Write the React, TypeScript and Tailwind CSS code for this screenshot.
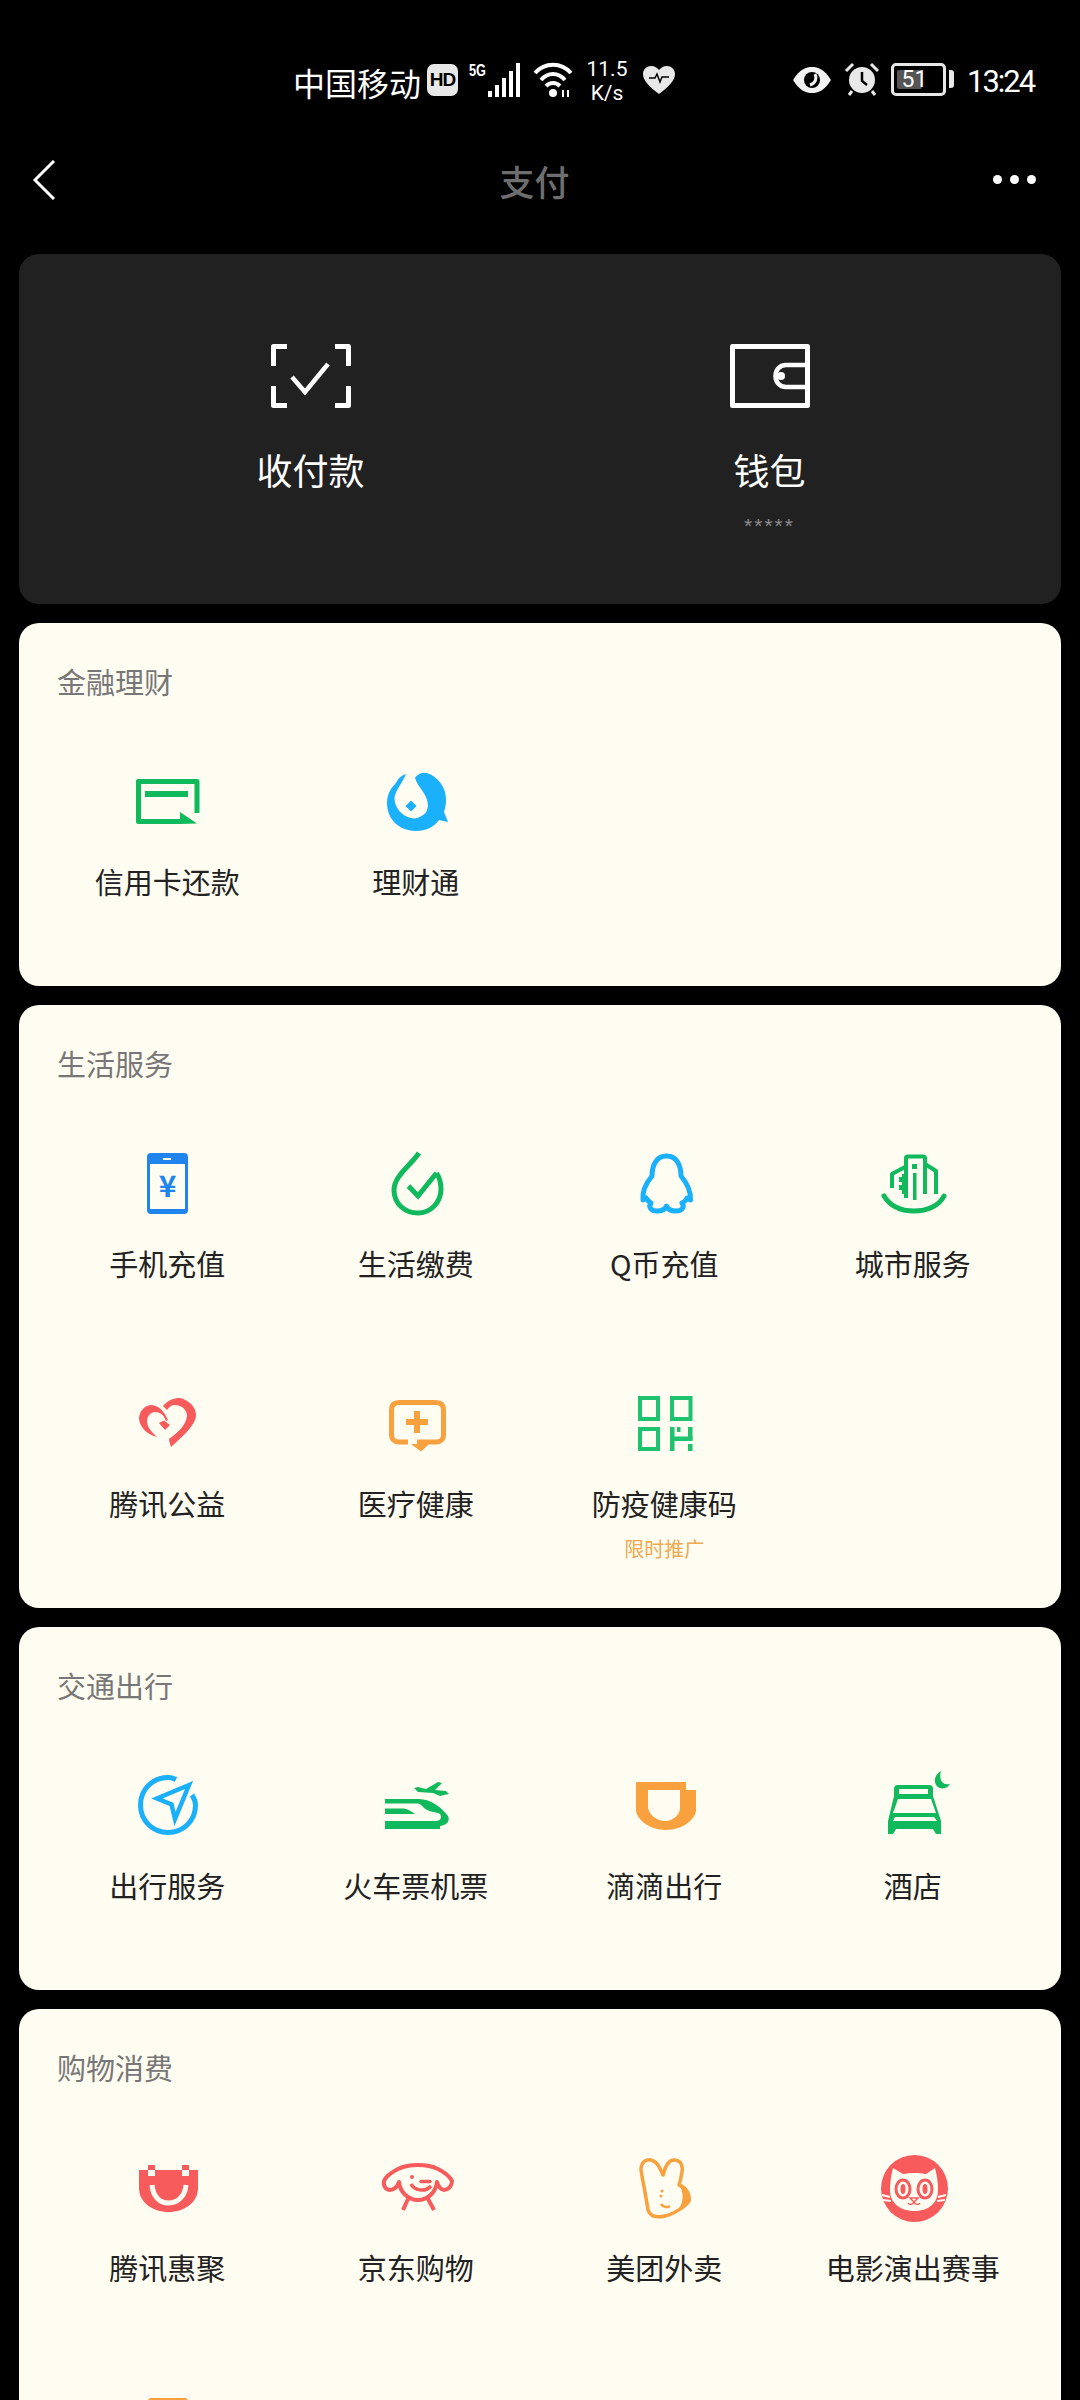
import type { ReactNode } from "react";

const CREAM = "#fffcf1";
const GREEN = "#10b95c";
const BLUE = "#1ab0fc";
const ORANGE = "#f8a13e";
const RED = "#f85b5c";

function Box({ children }: { children: ReactNode }) {
  return (
    <svg viewBox="0 0 80 80" className="w-[80px] h-[80px]" aria-hidden="true">
      {children}
    </svg>
  );
}

function CardIcon() {
  return (
    <Box>
      <path d="M70 51V19.500H11.500V59.500H55" fill="none" stroke={GREEN} strokeWidth="5" strokeLinejoin="round" />
      <rect x="18" y="29" width="43" height="6" fill={GREEN} />
      <path d="M53 50L70 61.500L53 62Z" fill={GREEN} />
    </Box>
  );
}

function FishIcon() {
  return (
    <Box>
      <path
        d="M30 12C24 14 22 17 20 21C14 27 11 33 11 41C11 58 24 69 40 69C50 69 58 65 63 58L72 60L68 50C72 38 70 26 62 18C57 13 51 10 46 11C42 12 40 14 39 16C42 26 52 32 52 44C51 50 49 52 47 53C43 56 39 57 35 56C26 54 19 46 18.500 37C18.500 29 26 22 30 12Z"
        fill={BLUE}
      />
      <path d="M35 38.500L40.500 44L35 49.500L29.500 44Z" fill={BLUE} />
    </Box>
  );
}

function PhoneIcon() {
  return (
    <Box>
      <rect x="20" y="9" width="41" height="61" rx="4" fill="#1f85ec" />
      <rect x="23" y="20" width="35" height="45" fill={CREAM} />
      <rect x="36" y="14" width="8" height="2" fill={CREAM} />
      <text x="40.500" y="53" textAnchor="middle" fontSize="30" fontWeight="700" fill="#1f85ec">
        ¥
      </text>
    </Box>
  );
}

function DropIcon() {
  return (
    <Box>
      <path
        d="M43 9C34 22 18 32 18 46C18 60 29 69 42 69C55 69 65 58 65 45C65 38 63 33 60.500 29"
        fill="none"
        stroke={GREEN}
        strokeWidth="5"
      />
      <path d="M32.500 42L42 52L60.500 29" fill="none" stroke={GREEN} strokeWidth="5" />
    </Box>
  );
}

function PenguinIcon() {
  return (
    <Box>
      <path
        d="M42.500 12C32 12 28 22 28 32C23 38 18 47 19 56L22 54C24 57 25 58 27 59C24 63 27 67 33 67C38 67 41 66 42.500 62C44 66 47 67 52 67C58 67 61 63 58 59C60 58 62 57 63 54L66.500 56C67 47 62 38 57 32C57 22 53 12 42.500 12Z"
        fill="none"
        stroke={BLUE}
        strokeWidth="5"
        strokeLinejoin="round"
      />
    </Box>
  );
}

function CityIcon() {
  return (
    <Box>
      <path d="M11 52C17 62 28 67 41 67C54 67 66 62 71 52" fill="none" stroke={GREEN} strokeWidth="5" strokeLinecap="round" />
      <path
        d="M33 54V14Q33 12.500 35 12.500H50Q52 12.500 52 14V50M52 20L63 27V50M32 23L19 30V44M31 30V50"
        fill="none"
        stroke={GREEN}
        strokeWidth="4"
        strokeLinejoin="round"
      />
      <rect x="26" y="33" width="4" height="5" fill={GREEN} />
      <rect x="26" y="41" width="4" height="5" fill={GREEN} />
      <rect x="39" y="20" width="5" height="5" fill={GREEN} />
      <rect x="40" y="29" width="3.500" height="27" fill={GREEN} />
    </Box>
  );
}

function HeartIcon() {
  return (
    <Box>
      <path
        d="M36 22C41 16 47 14 53 14C62 16 69 23 69 31C69 41 54 54 44 63C43 60 42 57 42 55C50 49 59 42 60 32C60 26 55 21 48 21C44 21 42 23 40 26Z"
        fill={RED}
      />
      <path
        d="M41 36C38 29 33 22 25 21C17 21 12 28 12 35C13 44 21 51 30 53C26 49 20 44 20 37C20 32 24 28 28 28C33 28 37 31 39 37Z"
        fill={RED}
      />
      <path d="M32 39L37 36.500L43 41L38 46Z" fill={RED} />
    </Box>
  );
}

function MedicalIcon() {
  return (
    <Box>
      <path
        d="M32 58H23C18 58 15.500 55 15.500 51V26C15.500 21 18 18.500 23 18.500H60C65 18.500 67.500 21 67.500 26V51C67.500 55 65 58 60 58H41"
        fill="none"
        stroke={ORANGE}
        strokeWidth="5"
      />
      <path d="M41 60H59L51 67.500Z" fill={ORANGE} transform="translate(-6 0)" />
      <rect x="38" y="27" width="6" height="22" fill={ORANGE} />
      <rect x="30" y="35" width="22" height="6" fill={ORANGE} />
    </Box>
  );
}

function QrIcon() {
  const c = "#1fc26f";
  return (
    <Box>
      <rect x="16" y="14" width="18" height="21" fill="none" stroke={c} strokeWidth="4" />
      <rect x="48" y="14" width="18.500" height="21" fill="none" stroke={c} strokeWidth="4" />
      <rect x="16" y="45" width="18" height="20" fill="none" stroke={c} strokeWidth="4" />
      <rect x="46" y="43" width="4.500" height="24" fill={c} />
      <rect x="46" y="52.500" width="22.500" height="4.500" fill={c} />
      <rect x="64" y="43" width="4.500" height="13" fill={c} />
      <rect x="64" y="60" width="4.500" height="7" fill={c} />
      <rect x="53" y="43" width="3.500" height="5" fill={c} />
    </Box>
  );
}

function CompassIcon() {
  return (
    <Box>
      <path
        d="M49 13.500C46 12 44 11.500 41 11.500C26 11.500 13.500 23 13.500 39C13.500 55 26 66.500 41 66.500C56 66.500 68.500 55 68.500 39C68.500 35 67 32 65 29"
        fill="none"
        stroke={BLUE}
        strokeWidth="5"
      />
      <path d="M62 19L30 32.500L44.500 38.500L48 53Z" fill="none" stroke={BLUE} strokeWidth="4.500" />
    </Box>
  );
}

function TrainIcon() {
  return (
    <Box>
      <path d="M38 22L42 21L50 23L62 16L66 17L59 24L70 25L73 28L68 29L64 30L57 27L42 26Z" fill={GREEN} />
      <path
        d="M9 33H43C55 33 66 42 72 50C74 54 72 59 64 60V63H9V55H60C65 55 66 51 64 48C61 46 52 46 48 42C46 40 45 38 42 37.500H9Z"
        fill={GREEN}
      />
      <path d="M9 42.500H28C32 43 36 46 39 48H9Z" fill={GREEN} />
    </Box>
  );
}

function DidiIcon() {
  return (
    <Box>
      <path
        d="M12 16H62V24H72V44C72 52 60 64 42 64C24 64 12 52 12 44ZM24 24V40C24 48 32 55 41 55C50 55 56 48 56 42V24Z"
        fill={ORANGE}
        fillRule="evenodd"
      />
    </Box>
  );
}

function HotelIcon() {
  return (
    <Box>
      <path
        d="M25 19H56Q60 19 60 23V30L68 55V68H63L60 63H23L20 68H15V55L21 30V23Q21 19 25 19Z"
        fill={GREEN}
      />
      <rect x="26" y="23" width="29" height="5" fill={CREAM} />
      <path d="M25 33H58L63 47H20Z" fill={CREAM} />
      <path d="M20 55L22 51H61L64 55Z" fill={CREAM} />
      <path d="M68 5C61 9 60 17 65 21C69 24 75 22 77 18C72 19 69 17 68 14C67 11 67 8 68 5Z" fill={GREEN} />
    </Box>
  );
}

function BagIcon() {
  return (
    <Box>
      <path d="M12 22H71V40C71 54 58 64 41.500 64C25 64 12 54 12 40Z" fill={RED} />
      <rect x="21" y="17" width="7" height="5" fill={RED} />
      <rect x="55" y="17" width="7" height="5" fill={RED} />
      <rect x="21" y="22" width="7" height="6" fill={CREAM} />
      <rect x="55" y="22" width="7" height="6" fill={CREAM} />
      <path d="M25 37C26 49 33 55 41.500 55C50 55 58 49 59 37" fill="none" stroke={CREAM} strokeWidth="5" />
    </Box>
  );
}

function DogIcon() {
  return (
    <Box>
      <path
        d="M22 21C28 18 36 17 42 17C48 17 56 18 62 21C68 24 74 29 76 33C76 38 72 42 68 42C65 42 62 38 61 34C60 44 52 52 42 52C32 52 24 44 23 34C22 38 18 42 14 42C10 42 7 38 8 33C10 28 16 24 22 21Z"
        fill="none"
        stroke={RED}
        strokeWidth="4"
        strokeLinejoin="round"
      />
      <path d="M32 51L27 62M52 51L58 62" fill="none" stroke={RED} strokeWidth="4" />
      <path d="M35 36C38 42 49 45 55 38" fill="none" stroke={RED} strokeWidth="3.500" />
      <path d="M45 33.500H54" stroke={RED} strokeWidth="3.500" strokeLinecap="round" />
      <circle cx="36" cy="29" r="2" fill={RED} />
    </Box>
  );
}

function RabbitIcon() {
  return (
    <Box>
      <path
        d="M24 62C22 48 19 35 17 22C17 14 22 11 27 12C33 13 36 20 39 27C41 19 44 12 50 12C57 12 59 18 58 24C57 30 56 34 55 37C63 40 66 47 65 53C62 58 50 66 41 68C32 70 26 68 24 62Z"
        fill="none"
        stroke={ORANGE}
        strokeWidth="3.500"
        strokeLinejoin="round"
      />
      <path d="M55 37C63 40 66 47 65 53C62 58 58 60 54 62C60 54 60 44 55 37Z" fill={ORANGE} />
      <circle cx="38" cy="43" r="1.500" fill={ORANGE} />
      <circle cx="37" cy="48" r="1.500" fill={ORANGE} />
      <path d="M37 56C39 59 43 60 46 58" fill="none" stroke={ORANGE} strokeWidth="2.500" />
    </Box>
  );
}

function CatIcon() {
  return (
    <Box>
      <circle cx="41.500" cy="40.500" r="33.500" fill={RED} />
      <path
        d="M20 20L30 26C36 24.500 47 24.500 53 26L62 20C64 28 65 34 65 42C65 54 57 63 41.500 63C26 63 17 54 17 42C17 34 18 28 20 20Z"
        fill={CREAM}
      />
      <ellipse cx="30" cy="41" rx="7" ry="9" fill="none" stroke={RED} strokeWidth="3" />
      <ellipse cx="52" cy="41" rx="7" ry="9" fill="none" stroke={RED} strokeWidth="3" />
      <ellipse cx="30" cy="41" rx="2.500" ry="5" fill={RED} />
      <ellipse cx="52" cy="41" rx="2.500" ry="5" fill={RED} />
      <path d="M37 50H45L41 54ZM41 54C40 57 36 57 35 55M41 54C42 57 46 57 47 55" fill="none" stroke={RED} strokeWidth="1.500" />
      <path d="M9 47L17 49M10 52L18 53M73 47L65 49M72 52L64 53" stroke={CREAM} strokeWidth="2" />
    </Box>
  );
}

function PartialIcon() {
  return (
    <Box>
      <rect x="21" y="10" width="40" height="30" rx="3" fill={ORANGE} />
    </Box>
  );
}

type Item = { label: string; icon: ReactNode; sub?: string };

const sections: { title: string; items: Item[] }[] = [
  {
    title: "金融理财",
    items: [
      { label: "信用卡还款", icon: <CardIcon /> },
      { label: "理财通", icon: <FishIcon /> },
    ],
  },
  {
    title: "生活服务",
    items: [
      { label: "手机充值", icon: <PhoneIcon /> },
      { label: "生活缴费", icon: <DropIcon /> },
      { label: "Q币充值", icon: <PenguinIcon /> },
      { label: "城市服务", icon: <CityIcon /> },
      { label: "腾讯公益", icon: <HeartIcon /> },
      { label: "医疗健康", icon: <MedicalIcon /> },
      { label: "防疫健康码", icon: <QrIcon />, sub: "限时推广" },
    ],
  },
  {
    title: "交通出行",
    items: [
      { label: "出行服务", icon: <CompassIcon /> },
      { label: "火车票机票", icon: <TrainIcon /> },
      { label: "滴滴出行", icon: <DidiIcon /> },
      { label: "酒店", icon: <HotelIcon /> },
    ],
  },
  {
    title: "购物消费",
    items: [
      { label: "腾讯惠聚", icon: <BagIcon /> },
      { label: "京东购物", icon: <DogIcon /> },
      { label: "美团外卖", icon: <RabbitIcon /> },
      { label: "电影演出赛事", icon: <CatIcon /> },
      { label: "", icon: <PartialIcon /> },
    ],
  },
];

function StatusBar() {
  return (
    <div className="flex h-[135px] items-start pl-[293px] pt-[58px] text-white">
      <span className="w-[134px] mt-[4px] text-[32px] leading-[40px] whitespace-nowrap">中国移动</span>
      <span className="mt-[6px] flex h-[32px] w-[31px] items-center justify-center rounded-[7px] bg-[#e8e8e8] font-['Liberation_Sans',sans-serif] text-[19px] font-bold tracking-[-1px] text-black">
        HD
      </span>
      <svg viewBox="0 0 54 36" className="ml-[11px] mt-[4px] h-[36px] w-[54px]" aria-hidden="true">
        <text x="0" y="14" fontSize="16" fontWeight="700" fill="#fff" fontFamily="Liberation Sans" textLength="17" lengthAdjust="spacingAndGlyphs">
          5G
        </text>
        <rect x="19" y="29" width="4" height="6" fill="#fff" />
        <rect x="26" y="23" width="4" height="12" fill="#fff" />
        <rect x="33" y="16" width="4" height="19" fill="#fff" />
        <rect x="40" y="9" width="4" height="26" fill="#fff" />
        <rect x="47" y="1" width="4" height="34" fill="#fff" />
      </svg>
      <svg viewBox="0 0 40 36" className="ml-[10px] mt-[4px] h-[36px] w-[40px]" aria-hidden="true">
        <path d="M2 11C12 0 28 0 38 11M8 18C15 10 25 10 32 18M13 24C17 20 23 20 27 24" fill="none" stroke="#fff" strokeWidth="4" />
        <circle cx="20" cy="31" r="4" fill="#fff" />
        <path d="M30 28V35M35 28V35" stroke="#fff" strokeWidth="2" />
      </svg>
      <span className="ml-[11px] -mt-[1px] w-[46px] text-center font-['Roboto',sans-serif] text-[21px] leading-[24px]">
        11.5
        <br />
        K/s
      </span>
      <svg viewBox="0 0 34 30" className="ml-[12px] mt-[7px] h-[30px] w-[34px]" aria-hidden="true">
        <path d="M17 29C8 22 1 16 1 9C1 4 5 1 9 1C13 1 15 3 17 5C19 3 21 1 25 1C29 1 33 4 33 9C33 16 26 22 17 29Z" fill="#e8e8e8" />
        <path d="M7 13H13L15 9L18 17L20 12H27" fill="none" stroke="#000" strokeWidth="1.500" />
      </svg>
      <svg viewBox="0 0 40 28" className="ml-[116px] mt-[8px] h-[28px] w-[40px]" aria-hidden="true">
        <path d="M1 14C8 3 14 1 20 1C26 1 32 3 39 14C32 25 26 27 20 27C14 27 8 25 1 14Z" fill="#f2f2f2" />
        <circle cx="20" cy="14" r="8" fill="#000" />
        <path d="M23 8C25 12 24 17 18 19" fill="none" stroke="#f2f2f2" strokeWidth="3" />
      </svg>
      <svg viewBox="0 0 36 34" className="ml-[12px] mt-[4px] h-[34px] w-[36px]" aria-hidden="true">
        <circle cx="18" cy="18" r="13" fill="#e8e8e8" />
        <path d="M18 10V19L23 23" fill="none" stroke="#000" strokeWidth="2.500" />
        <path d="M2 9L9 2M34 9L27 2M8 29L5 33M28 29L31 33" stroke="#e8e8e8" strokeWidth="3" />
      </svg>
      <div className="relative ml-[11px] mt-[5px] h-[33px] w-[55px] rounded-[5px] border-[3px] border-[#e8e8e8] text-center font-['Roboto',sans-serif] text-[23px] leading-[27px]">
        <span className="absolute left-[3px] top-[4px] h-[19px] w-[25px] rounded-[2px] bg-[#555]" />
        <span className="relative -ml-[8px]">51</span>
      </div>
      <span className="ml-[3px] mt-[12px] h-[18px] w-[5px] rounded-r-[3px] bg-[#e8e8e8]" />
      <span className="ml-[13px] mt-[8px] font-['Roboto',sans-serif] text-[31px] leading-[32px] tracking-[-2px]">13:24</span>
    </div>
  );
}

function Header() {
  return (
    <div className="flex h-[119px] items-start justify-between pl-[32px] pr-[44px] pt-[25px]">
      <svg viewBox="0 0 24 40" className="h-[40px] w-[24px]" aria-hidden="true">
        <path d="M22 1L3 20L22 39" fill="none" stroke="#fff" strokeWidth="3" />
      </svg>
      <span className="ml-[20px] -mt-[1px] text-[35px] font-medium leading-[44px] text-[#6e6e6e]">支付</span>
      <div className="mt-[15px] flex gap-[8px]">
        <span className="h-[9px] w-[9px] rounded-full bg-white" />
        <span className="h-[9px] w-[9px] rounded-full bg-white" />
        <span className="h-[9px] w-[9px] rounded-full bg-white" />
      </div>
    </div>
  );
}

function PayCard() {
  return (
    <section className="grid h-[350px] grid-cols-2 rounded-[20px] bg-[#212121] px-[62px] pt-[90px]">
      <div className="flex flex-col items-center">
        <svg viewBox="0 0 80 64" className="h-[64px] w-[80px]" aria-hidden="true">
          <path d="M16 2.500H2.500V22M64 2.500H77.500V22M16 61.500H2.500V42M64 61.500H77.500V42" fill="none" stroke="#fff" strokeWidth="5" strokeLinejoin="round" />
          <path d="M21 33L34 48L57 20" fill="none" stroke="#fff" strokeWidth="4.500" />
        </svg>
        <span className="mt-[35px] text-[36px] leading-[52px] text-white">收付款</span>
      </div>
      <div className="flex flex-col items-center">
        <svg viewBox="0 0 80 64" className="h-[64px] w-[80px]" aria-hidden="true">
          <path d="M77.500 2.500H2.500V61.500H77.500Z" fill="none" stroke="#fff" strokeWidth="5" strokeLinejoin="round" />
          <path d="M77 21H56C42 21 42 43 56 43H77" fill="none" stroke="#fff" strokeWidth="4.500" />
          <circle cx="51" cy="32" r="4" fill="#fff" />
        </svg>
        <span className="mt-[35px] text-[36px] leading-[52px] text-white">钱包</span>
        <span className="mt-[20px] font-['Liberation_Sans',sans-serif] text-[21px] leading-[22px] tracking-[2px] text-[#8c8c8c]">*****</span>
      </div>
    </section>
  );
}

function Section({ title, items }: { title: string; items: Item[] }) {
  return (
    <section className="rounded-[20px] bg-[#fffcf1] px-[24px] pb-[5px]">
      <h2 className="h-[118px] pl-[14px] pt-[38px] text-[29px] font-normal leading-[40px] text-[#777]">{title}</h2>
      <div className="grid grid-cols-4">
        {items.map((item) => (
          <div key={item.label} className="flex h-[240px] flex-col items-center pt-[21px]">
            {item.icon}
            <span className="mt-[19px] whitespace-nowrap text-[29px] leading-[40px] text-[#222]">{item.label}</span>
            {item.sub && <span className="mt-[16px] text-[20px] leading-[20px] text-[#f0a94e]">{item.sub}</span>}
          </div>
        ))}
      </div>
    </section>
  );
}

export default function App() {
  return (
    <div className="h-[2400px] w-[1080px] overflow-hidden bg-black font-['Noto_Sans_CJK_SC','Noto_Sans',sans-serif]">
      <StatusBar />
      <Header />
      <main className="flex flex-col gap-[19px] px-[19px]">
        <PayCard />
        {sections.map((s) => (
          <Section key={s.title} title={s.title} items={s.items} />
        ))}
      </main>
    </div>
  );
}
